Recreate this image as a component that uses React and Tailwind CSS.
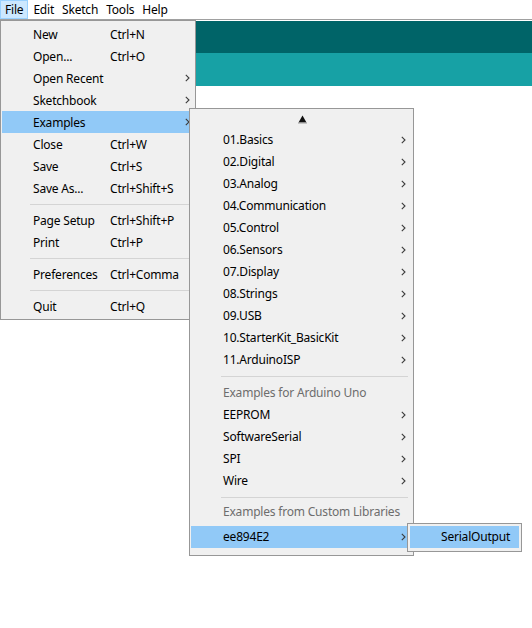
import React from "react";

const fileItems = [
  { label: "New", key: "Ctrl+N" },
  { label: "Open...", key: "Ctrl+O" },
  { label: "Open Recent", sub: true },
  { label: "Sketchbook", sub: true },
  { label: "Examples", sub: true, active: true },
  { label: "Close", key: "Ctrl+W" },
  { label: "Save", key: "Ctrl+S" },
  { label: "Save As...", key: "Ctrl+Shift+S" },
  { sep: true },
  { label: "Page Setup", key: "Ctrl+Shift+P" },
  { label: "Print", key: "Ctrl+P" },
  { sep: true },
  { label: "Preferences", key: "Ctrl+Comma" },
  { sep: true },
  { label: "Quit", key: "Ctrl+Q" },
];

const builtIn = [
  "01.Basics",
  "02.Digital",
  "03.Analog",
  "04.Communication",
  "05.Control",
  "06.Sensors",
  "07.Display",
  "08.Strings",
  "09.USB",
  "10.StarterKit_BasicKit",
  "11.ArduinoISP",
];

const boardLibs = ["EEPROM", "SoftwareSerial", "SPI", "Wire"];

function Chevron({ className }) {
  return (
    <svg width="5" height="8" viewBox="0 0 5 8" className={className}>
      <path d="M0.8 0.8 L4 4 L0.8 7.2" fill="none" stroke="#3c3c3c" strokeWidth="1.1" />
    </svg>
  );
}

function Separator({ left }) {
  return (
    <div className={`h-[10px] flex items-center pr-[4px] ${left}`}>
      <div className="w-full h-px bg-[#d4d4d4]"></div>
    </div>
  );
}

function SubItem({ label, active }) {
  return (
    <div className={`relative h-[22px] flex items-center pl-[32px] ${active ? "bg-[#91c9f7]" : ""}`}>
      {label}
      <Chevron className="absolute right-[6px] top-[7px]" />
    </div>
  );
}

export default function App() {
  return (
    <div
      className="relative w-[532px] h-[628px] bg-white overflow-hidden text-[12px] tracking-[-0.2px] text-black"
      style={{ fontFamily: '"Noto Sans", "Open Sans", sans-serif' }}
    >
      {/* menu bar */}
      <div className="h-[20px] flex items-stretch border-b border-[#a0a0a0] leading-none">
        {["File", "Edit", "Sketch", "Tools", "Help"].map((m, i) => (
          <div
            key={m}
            className={`flex items-center px-[4px] ${i === 0 ? "bg-[#cce8ff] border border-[#99d1ff] px-[3px] mr-[1px]" : ""}`}
          >
            {m}
          </div>
        ))}
      </div>

      {/* toolbar bands */}
      <div className="mt-[1px] h-[32px] bg-[#006468]"></div>
      <div className="h-[33px] bg-[#17a1a5]"></div>

      {/* File menu */}
      <div className="absolute left-0 top-[20px] w-[196px] h-[300px] bg-[#f0f0f0] border border-[#979797] px-[1px] pt-[2px]">
        {fileItems.map((it, i) =>
          it.sep ? (
            <Separator key={i} left="pl-[28px]" />
          ) : (
            <div
              key={i}
              className={`relative h-[22px] flex items-center pl-[31px] pt-[1px] ${it.active ? "bg-[#91c9f7]" : ""}`}
            >
              <span className="w-[77px]">{it.label}</span>
              {it.key && <span>{it.key}</span>}
              {it.sub && <Chevron className="absolute right-[4px] top-[7px]" />}
            </div>
          )
        )}
      </div>

      {/* Examples submenu */}
      <div className="absolute left-[189px] top-[108px] w-[225px] h-[448px] bg-[#f0f0f0] border border-[#979797] p-[1px]">
        <div className="h-[19px] flex items-center justify-center pl-[2px]">
          <svg width="9" height="9" viewBox="0 0 9 9">
            <polygon points="4.5,0.5 8.5,7.5 0.5,7.5" fill="#111" />
            <rect x="0" y="7.5" width="9" height="1" fill="#9a9a9a" />
          </svg>
        </div>
        {builtIn.map((t) => (
          <SubItem key={t} label={t} />
        ))}
        <Separator left="pl-[30px]" />
        <div className="h-[23px] flex items-center pl-[32px] pt-[1px] text-[#6d6d6d]">Examples for Arduino Uno</div>
        {boardLibs.map((t) => (
          <SubItem key={t} label={t} />
        ))}
        <Separator left="pl-[30px]" />
        <div className="h-[24px] flex items-center pl-[32px] pb-[4px] text-[#6d6d6d]">Examples from Custom Libraries</div>
        <SubItem label="ee894E2" active />
      </div>

      {/* ee894E2 submenu */}
      <div className="absolute left-[407px] top-[523px] w-[115px] h-[29px] bg-[#f0f0f0] border border-[#979797] p-[2px]">
        <div className="h-[22px] flex items-center pl-[31px] bg-[#91c9f7]">SerialOutput</div>
      </div>
    </div>
  );
}
